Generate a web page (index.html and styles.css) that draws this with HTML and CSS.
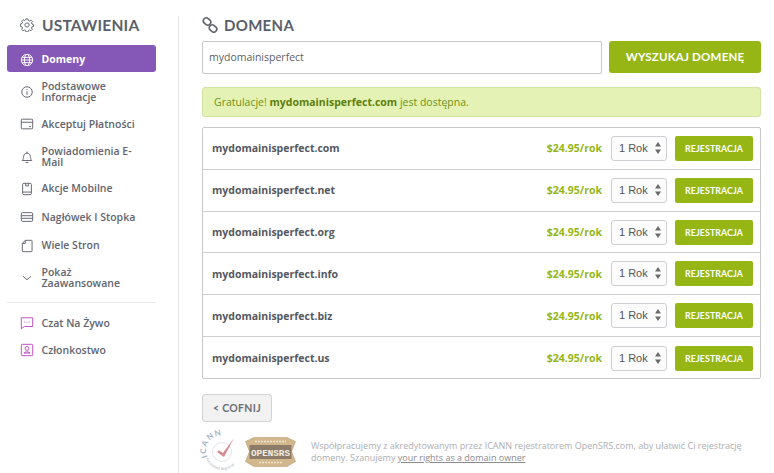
FILE: index.html
```html
<!DOCTYPE html>
<html lang="pl">
<head>
<meta charset="utf-8">
<title>Ustawienia</title>
<link rel="stylesheet" href="styles.css">
</head>
<body>
<div class="page">
  <aside class="sidebar">
    <h2 class="side-title">
      <svg class="ico" viewBox="0 0 16 16"><circle cx="8" cy="8" r="2.4"/><path d="M6.8 1h2.400l.4 1.800 1.300.6 1.600-1 1.600 1.600-1 1.600.6 1.300 1.800.4v2.400l-1.800.4-.6 1.300 1 1.600-1.600 1.600-1.600-1-1.300.6-.4 1.800H6.800l-.4-1.800-1.300-.6-1.600 1-1.600-1.600 1-1.600-.6-1.300-1.800-.4V6.800l1.800-.4.6-1.300-1-1.600 1.600-1.600 1.600 1 1.300-.6z"/></svg>
      <span>USTAWIENIA</span>
    </h2>
    <nav class="menu">
      <a class="item active"><svg class="ico" viewBox="0 0 16 16"><circle cx="8" cy="8" r="6.500"/><ellipse cx="8" cy="8" rx="3" ry="6.500"/><path d="M1.500 8h13M2.400 5h11.200M2.400 11h11.200"/></svg><span>Domeny</span></a>
      <a class="item tall"><svg class="ico" viewBox="0 0 16 16"><circle cx="8" cy="8" r="6"/><path d="M8 7.200v4M8 4.600v1"/></svg><span>Podstawowe Informacje</span></a>
      <a class="item short"><svg class="ico" viewBox="0 0 16 16"><rect x="1.500" y="2.500" width="13" height="11" rx="1"/><path d="M1.500 6h13M10.500 11h2"/></svg><span>Akceptuj Płatności</span></a>
      <a class="item tall"><svg class="ico" viewBox="0 0 16 16"><path d="M2.500 12h11c-1.500-1.500-1.500-3-1.700-5-.2-2-1.800-3.300-3.800-3.300S4.400 5 4.200 7c-.2 2-.2 3.500-1.700 5zM8 1.800v1.900M6.500 14.300h3"/></svg><span>Powiadomienia E-Mail</span></a>
      <a class="item short"><svg class="ico" viewBox="0 0 16 16"><rect x="3" y="1.500" width="10" height="13" rx="1.500"/><path d="M3 11.500h10M6.500 1.500v3h3v-3"/></svg><span>Akcje Mobilne</span></a>
      <a class="item short"><svg class="ico" viewBox="0 0 16 16"><rect x="1.500" y="3" width="13" height="10" rx="1.500"/><path d="M1.500 6.500h13M1.500 9.500h13"/></svg><span>Nagłówek I Stopka</span></a>
      <a class="item short"><svg class="ico" viewBox="0 0 16 16"><path d="M6 1.500h7a.8.8 0 0 1 .8.8v11.400a.8.8 0 0 1-.8.8H3.500a.8.8 0 0 1-.8-.8V5z"/><path d="M6 1.500V5H2.700"/></svg><span>Wiele Stron</span></a>
      <a class="item tall"><svg class="ico" viewBox="0 0 16 16"><path d="M3.500 6l4.500 4 4.500-4"/></svg><span>Pokaż Zaawansowane</span></a>
    </nav>
    <hr class="side-rule">
    <nav class="menu">
      <a class="item compact"><svg class="ico pink" viewBox="0 0 16 16"><path d="M1.500 2h13v10H5l-3.500 2.500z"/><path d="M5 7h1M7.500 7h1M10 7h1"/></svg><span>Czat Na Żywo</span></a>
      <a class="item compact"><svg class="ico pink" viewBox="0 0 16 16"><rect x="1.500" y="1.500" width="13" height="13" rx="1"/><circle cx="8" cy="6.200" r="2.200"/><path d="M4.500 11.500c.8-1.800 6.200-1.800 7 0z"/></svg><span>Członkostwo</span></a>
    </nav>
  </aside>

  <main class="main">
    <h2 class="main-title">
      <svg class="link-ico" viewBox="0 0 16 16"><rect x="1" y="1.500" width="8" height="6" rx="3" transform="rotate(40 5 4.500)"/><rect x="7" y="8.500" width="8" height="6" rx="3" transform="rotate(40 11 11.500)"/></svg>
      <span>DOMENA</span>
    </h2>
    <form class="search">
      <div class="search-input">mydomainisperfect</div>
      <button class="search-btn" type="button">WYSZUKAJ DOMENĘ</button>
    </form>
    <div class="notice">Gratulacje! <b>mydomainisperfect.com</b> jest dostępna.</div>
    <div class="results">
      <div class="row"><b class="name">mydomainisperfect.com</b><span class="price">$24.95/rok</span><span class="select">1 Rok<svg class="updown" viewBox="0 0 8 14"><path d="M4 1l3 4.500H1zM4 13l3-4.500H1z"/></svg></span><button class="reg" type="button">REJESTRACJA</button></div>
      <div class="row"><b class="name">mydomainisperfect.net</b><span class="price">$24.95/rok</span><span class="select">1 Rok<svg class="updown" viewBox="0 0 8 14"><path d="M4 1l3 4.500H1zM4 13l3-4.500H1z"/></svg></span><button class="reg" type="button">REJESTRACJA</button></div>
      <div class="row"><b class="name">mydomainisperfect.org</b><span class="price">$24.95/rok</span><span class="select">1 Rok<svg class="updown" viewBox="0 0 8 14"><path d="M4 1l3 4.500H1zM4 13l3-4.500H1z"/></svg></span><button class="reg" type="button">REJESTRACJA</button></div>
      <div class="row"><b class="name">mydomainisperfect.info</b><span class="price">$24.95/rok</span><span class="select">1 Rok<svg class="updown" viewBox="0 0 8 14"><path d="M4 1l3 4.500H1zM4 13l3-4.500H1z"/></svg></span><button class="reg" type="button">REJESTRACJA</button></div>
      <div class="row"><b class="name">mydomainisperfect.biz</b><span class="price">$24.95/rok</span><span class="select">1 Rok<svg class="updown" viewBox="0 0 8 14"><path d="M4 1l3 4.500H1zM4 13l3-4.500H1z"/></svg></span><button class="reg" type="button">REJESTRACJA</button></div>
      <div class="row"><b class="name">mydomainisperfect.us</b><span class="price">$24.95/rok</span><span class="select">1 Rok<svg class="updown" viewBox="0 0 8 14"><path d="M4 1l3 4.500H1zM4 13l3-4.500H1z"/></svg></span><button class="reg" type="button">REJESTRACJA</button></div>
    </div>
    <button class="back" type="button">&lt; COFNIJ</button>
    <footer class="foot">
      <svg class="icann" viewBox="0 0 38 38">
        <defs>
          <path id="icann-top" d="M5.500 24A15 15 0 0 1 33 11"/>
          <path id="icann-bot" d="M4 25A17 17 0 0 0 37 23"/>
        </defs>
        <circle cx="20" cy="19" r="9.500" class="icann-ring"/>
        <path d="M15 19l2-1.500 4 2.500L32 5 22 24z" class="icann-check"/>
        <text class="icann-text"><textPath href="#icann-top">ICANN</textPath></text>
        <text class="icann-sub"><textPath href="#icann-bot">Accredited Registrar</textPath></text>
      </svg>
      <svg class="srs" viewBox="0 0 51 30">
        <path d="M9 0.500h33l8.500 4-4 10 4 10-8.500 5H9l-8.500-5 4-10-4-10z" class="srs-bg"/>
        <rect x="4.500" y="8" width="42" height="14" class="srs-band"/>
        <path d="M10 4.500h31M14 25.500h23" class="srs-strip"/>
        <text x="25.500" y="19" class="srs-name">OPENSRS</text>
      </svg>
      <p class="foot-text">Współpracujemy z akredytowanym przez ICANN rejestratorem OpenSRS.com, aby ułatwić Ci rejestrację domeny. Szanujemy <u>your rights as a domain owner</u></p>
    </footer>
  </main>
</div>
</body>
</html>
```
FILE: styles.css
```css
* { box-sizing: border-box; }
html, body { margin: 0; height: 100%; overflow: hidden; background: #fff; }
body { font-family: "Open Sans", sans-serif; color: #5b5f6b; }
.page { display: flex; height: 473px; }

.sidebar { width: 179px; margin-top: 16px; padding: 0 22px 0 7px; border-right: 1px solid #e6e6e8; flex: none; }
.side-title { display: flex; align-items: center; gap: 8px; margin: 0 0 11px 13px; height: 18px; font: 700 15.500px/18px Lato, sans-serif; letter-spacing: .2px; color: #5b5f6b; }
.ico { width: 14px; height: 14px; flex: none; fill: none; stroke: #63666f; stroke-width: 1.100; }
.ico.pink { stroke: #bd4fc0; }
.menu { display: flex; flex-direction: column; }
.item { display: flex; align-items: center; gap: 7.500px; padding: 2px 6px 0 13px; font-size: 10.500px; font-weight: 600; line-height: 11px; color: #62656f; border-radius: 3px; }
.item.active { height: 27px; background: #8557b7; color: #fff; font-weight: 700; margin-bottom: 1px; }
.item.active .ico { stroke: #fff; }
.item.tall { height: 36px; }
.item.short { height: 28.500px; }
.item.compact { height: 27px; }
.side-rule { height: 1px; border: 0; background: #e8e8ea; margin: 7px 0 5.500px; }

.main { flex: 1; padding: 16px 13px 0 23px; min-width: 0; }
.main-title { display: flex; align-items: center; gap: 6px; margin: 0 0 7px; height: 18px; font: 700 15px/18px Lato, sans-serif; letter-spacing: .3px; color: #5b5f6b; }
.link-ico { width: 16px; height: 16px; fill: none; stroke: #63666f; stroke-width: 1.700; }
.search { display: flex; gap: 7px; margin: 0 0 13px; }
.search-input { flex: 1; height: 33px; padding: 0 6px; border: 1px solid #c8c8c8; border-radius: 2px; font-size: 10.500px; line-height: 31px; color: #5d5f66; }
.search-btn { width: 152px; height: 32px; border: 0; border-radius: 3px; background: #95b615; color: #fff; font: 700 11.500px/32px Lato, sans-serif; letter-spacing: .2px; padding: 0; }
.notice { height: 30px; padding: 0 11px; margin: 0 0 10px; background: #e4f3b5; border: 1px solid #d3e3a3; border-radius: 3px; font-size: 10.500px; line-height: 28px; color: #708f15; }
.notice b { color: #5f7f0c; }
.results { border: 1px solid #c8c8ca; border-radius: 2px; height: 252px; }
.row { display: flex; align-items: center; height: 41.830px; padding: 0 7px 0 9px; border-bottom: 1px solid #cfcfd1; }
.row:last-child { border-bottom: 0; }
.name { flex: 1; font-size: 10.500px; font-weight: 700; color: #55585f; }
.price { font-size: 10.500px; font-weight: 700; color: #95b615; margin-right: 9px; }
.select { position: relative; display: block; width: 56px; height: 25px; padding-left: 7px; margin-right: 8px; border: 1px solid #cfcfd3; border-radius: 3px; background: #fcfcfc; font: 400 11px/23px "Liberation Sans", sans-serif; color: #555; }
.updown { position: absolute; right: 4px; top: 4px; width: 8px; height: 14px; fill: #6a6a6a; }
.reg { width: 78px; height: 25px; padding: 0; border: 0; border-radius: 2px; background: #95b615; color: #fff; font: 700 8.800px/25px Lato, sans-serif; letter-spacing: .1px; }
.back { display: block; width: 70px; height: 28px; margin: 15px 0 0; padding: 0; background: #f2f2f2; border: 1px solid #d2d2d2; border-radius: 3px; font: 700 10.500px/26px Lato, sans-serif; letter-spacing: .3px; color: #6b6e76; }
.foot { display: flex; align-items: center; margin-top: 11px; }
.icann { width: 38px; height: 38px; flex: none; margin-right: 5px; overflow: visible; }
.icann-ring { fill: none; stroke: #e2e4e8; stroke-width: 1; }
.icann-check { fill: #d48a8e; }
.icann-text { font: 700 8px Lato, sans-serif; letter-spacing: 1.200px; fill: #a6b4c6; }
.icann-sub { font: 400 3.800px "Open Sans", sans-serif; fill: #a9b0ba; }
.srs { width: 51px; height: 30px; flex: none; margin-right: 15px; }
.srs-bg { fill: #d2b68c; stroke: #b99d74; stroke-width: .6; }
.srs-band { fill: #8d7b69; }
.srs-strip { fill: none; stroke: #f0e6d4; stroke-width: 1.500; stroke-dasharray: 2 1; }
.srs-name { font: 700 9.300px "Liberation Mono", monospace; fill: #f3eee4; text-anchor: middle; }
.foot-text { margin: 0; font-size: 9px; line-height: 12px; color: #aeaeb0; }
.foot-text u { color: #8c8c8e; }
```
